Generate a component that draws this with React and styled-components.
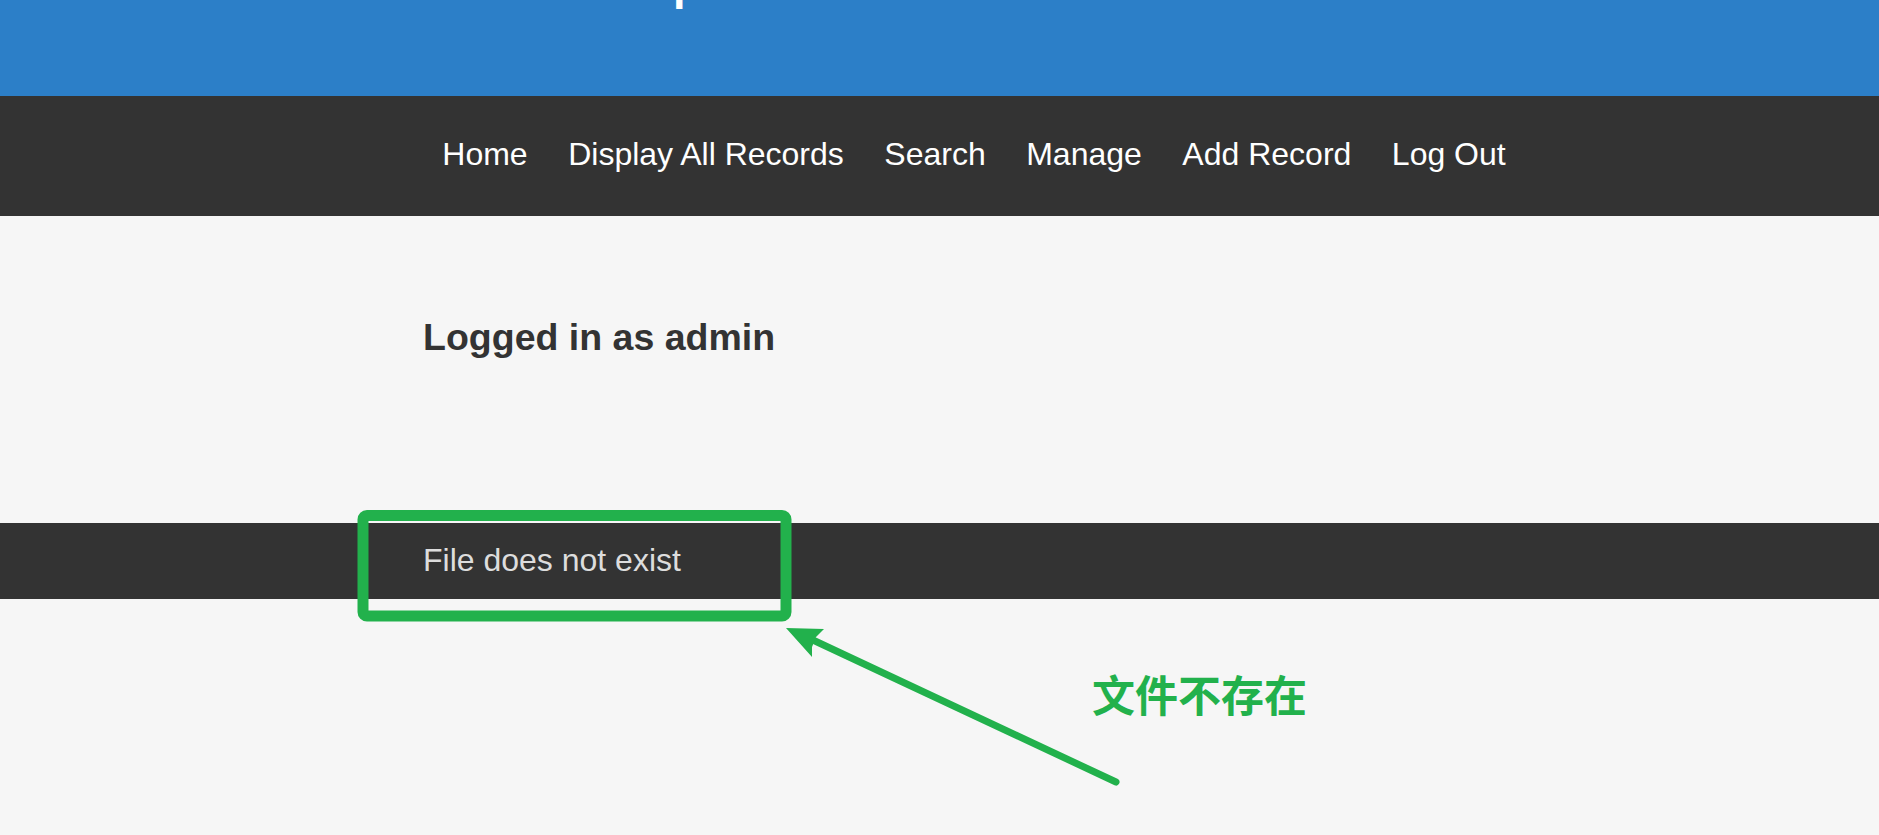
import React from 'react'
import styled, { createGlobalStyle } from 'styled-components'

const GlobalStyle = createGlobalStyle`
  html, body {
    margin:0;
    padding:0;
    background:#f6f6f6;
    font-family:"Liberation Sans", Arial, sans-serif;
  }
`

const Page = styled.div`
  position:relative;
  width:100%;
  min-height:835px;
  overflow:hidden;
`

const Header = styled.header`
  background:#2c7fc8;
  height:96px;
  overflow:hidden;
`

const Container = styled.div`
  max-width:1033px;
  margin:0 auto;
`

const Title = styled.h1`
  margin:-38.5px 0 0;
  font-size:45px;
  line-height:45px;
  font-weight:700;
  color:#ffffff;
`

const Nav = styled.nav`
  background:#333333;
  height:120px;
  box-sizing:border-box;
  padding:40px 0 0 69px;
`

const Menu = styled.ul`
  list-style:none;
  margin:0;
  padding:0;
  display:flex;
  justify-content:center;
  gap:40.5px;
`

const MenuItem = styled.li`
  font-size:32px;
  line-height:37px;
  color:#ffffff;
  cursor:pointer;
`

const Main = styled.main`
  height:307px;
  box-sizing:border-box;
  padding-top:100px;
`

const Status = styled.h2`
  margin:0;
  font-size:37.5px;
  font-weight:700;
  color:#333333;
`

const Footer = styled.footer`
  background:#333333;
  height:76px;
  box-sizing:border-box;
  padding-top:19px;
`

const FooterText = styled.p`
  margin:0;
  font-size:32px;
  line-height:37px;
  color:#dddddd;
`

// annotation layer drawn on top of the screenshot
const Overlay = styled.svg`
  position:absolute;
  left:0;
  top:0;
  pointer-events:none;
`

const Note = styled.span`
  position:absolute;
  left:1092px;
  top:672px;
  font-family:"Noto Sans CJK SC", sans-serif;
  font-size:43px;
  line-height:43px;
  font-weight:700;
  color:#22b14c;
  white-space:nowrap;
`

const links = ['Home', 'Display All Records', 'Search', 'Manage', 'Add Record', 'Log Out']

const App = () => {
  return (
    <>
      <GlobalStyle />
      <Page>
        <Header>
          <Container>
            <Title>Record Keeper</Title>
          </Container>
        </Header>
        <Nav>
          <Menu>
            {links.map(l => <MenuItem key={l}>{l}</MenuItem>)}
          </Menu>
        </Nav>
        <Main>
          <Container>
            <Status>Logged in as admin</Status>
          </Container>
        </Main>
        <Footer>
          <Container>
            <FooterText>File does not exist</FooterText>
          </Container>
        </Footer>

        <Overlay width="1879" height="835" viewBox="0 0 1879 835">
          <rect x="363" y="515.5" width="423" height="100.5" rx="4" fill="none" stroke="#22b14c" strokeWidth="11" />
          <line x1="1116" y1="782" x2="815" y2="641" stroke="#22b14c" strokeWidth="7" strokeLinecap="round" />
          <polygon points="786,628 824,629 816,637 812,647 812,657" fill="#22b14c" />
        </Overlay>
        <Note>文件不存在</Note>
      </Page>
    </>
  )
}

export default App
